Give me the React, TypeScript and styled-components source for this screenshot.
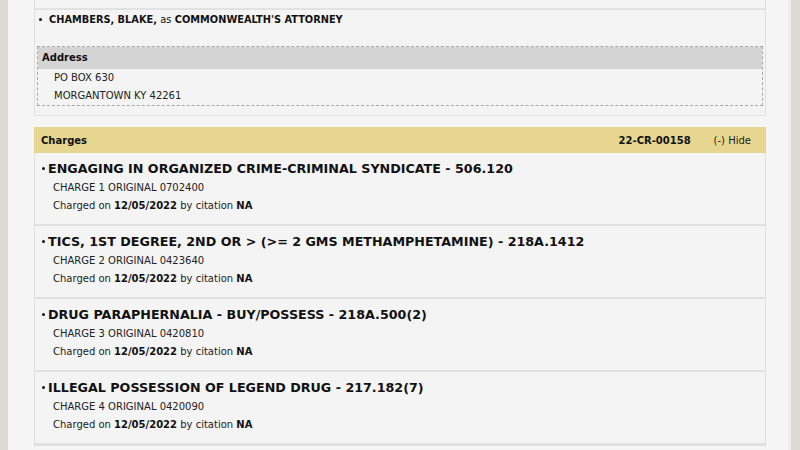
import React from "react";
import styled, { createGlobalStyle } from "styled-components";

const GlobalStyle = createGlobalStyle`
  html, body {
    margin: 0;
    padding: 0;
    background: #dcdad3;
    font-family: "DejaVu Sans", Verdana, sans-serif;
    color: #111;
  }
`;

const Page = styled.div`
  margin: 0 9px 0 8px;
  height: 450px;
  overflow: hidden;
  background: #f5f5f5;
  padding: 0 22px 0 26px;
  box-sizing: border-box;
  border-right: 3px solid #ececec;
`;

const Panel = styled.div<{ $gap?: number }>`
  margin-top: ${(p) => p.$gap ?? 0}px;
  border: 1px solid #e0e0e0;
  border-top: none;
  background: #f4f4f4;
`;

const PrevRow = styled.div`
  height: 8px;
  border-bottom: 2px solid #e2e2e2;
`;

const PartyRow = styled.div`
  padding: 0 2px 9px 2px;
`;

const PartyLine = styled.div`
  display: flex;
  align-items: center;
  gap: 7px;
  height: 18px;
  padding-left: 2px;
  font-size: 9.8px;
  font-weight: bold;

  span.as {
    font-weight: normal;
  }
`;

const Dot = styled.span<{ $size: number }>`
  width: ${(p) => p.$size}px;
  height: ${(p) => p.$size}px;
  border-radius: 50%;
  background: #111;
  flex: none;
`;

const AddressBox = styled.div`
  margin-top: 18px;
  border: 1px dashed #a8a8a8;
`;

const AddressHead = styled.div`
  background: #d4d4d4;
  height: 22px;
  line-height: 22px;
  padding-left: 4px;
  font-size: 10px;
  font-weight: bold;
`;

const AddressLine = styled.div`
  padding-left: 16px;
  height: 18px;
  line-height: 18px;
  font-size: 10px;
  color: #222;
`;

const Header = styled.div`
  display: flex;
  align-items: center;
  height: 26px;
  margin: 0 -1px;
  padding: 0 15px 0 7px;
  background: #e6d68f;
  font-size: 10px;
`;

const HeaderTitle = styled.span`
  font-weight: bold;
  flex: 1;
`;

const CaseNo = styled.span`
  font-weight: bold;
  margin-right: 23px;
`;

const Toggle = styled.span`
  color: #222;
`;

const ChargeRow = styled.div`
  padding: 6px 0 9px 0;
  border-bottom: 2px solid #e0e0e0;
`;

const ChargeTitle = styled.div`
  display: flex;
  align-items: center;
  gap: 3px;
  height: 18px;
  padding-left: 7px;
  font-size: 12.7px;
  font-weight: bold;
  white-space: nowrap;
`;

const SubLine = styled.div<{ $first?: boolean }>`
  margin-top: ${(p) => (p.$first ? 2 : 0)}px;
  padding-left: 18px;
  height: 18px;
  line-height: 18px;
  font-size: 10px;
  color: #222;

  b {
    color: #111;
  }
`;

const charges = [
  { title: "ENGAGING IN ORGANIZED CRIME-CRIMINAL SYNDICATE - 506.120", code: "0702400" },
  { title: "TICS, 1ST DEGREE, 2ND OR > (>= 2 GMS METHAMPHETAMINE) - 218A.1412", code: "0423640" },
  { title: "DRUG PARAPHERNALIA - BUY/POSSESS - 218A.500(2)", code: "0420810" },
  { title: "ILLEGAL POSSESSION OF LEGEND DRUG - 217.182(7)", code: "0420090" },
];

export default function App() {
  return (
    <>
      <GlobalStyle />
      <Page>
        <Panel>
          <PrevRow />
          <PartyRow>
            <PartyLine>
              <Dot $size={3} />
              <span>
                CHAMBERS, BLAKE, <span className="as">as</span> COMMONWEALTH'S ATTORNEY
              </span>
            </PartyLine>
            <AddressBox>
              <AddressHead>Address</AddressHead>
              <AddressLine>PO BOX 630</AddressLine>
              <AddressLine>MORGANTOWN KY 42261</AddressLine>
            </AddressBox>
          </PartyRow>
        </Panel>

        <Panel $gap={11}>
          <Header>
            <HeaderTitle>Charges</HeaderTitle>
            <CaseNo>22-CR-00158</CaseNo>
            <Toggle>(-) Hide</Toggle>
          </Header>
          {charges.map((c, i) => (
            <ChargeRow key={c.code}>
              <ChargeTitle>
                <Dot $size={3} />
                <span>{c.title}</span>
              </ChargeTitle>
              <SubLine $first>
                CHARGE {i + 1} ORIGINAL {c.code}
              </SubLine>
              <SubLine>
                Charged on <b>12/05/2022</b> by citation <b>NA</b>
              </SubLine>
            </ChargeRow>
          ))}
        </Panel>
      </Page>
    </>
  );
}
